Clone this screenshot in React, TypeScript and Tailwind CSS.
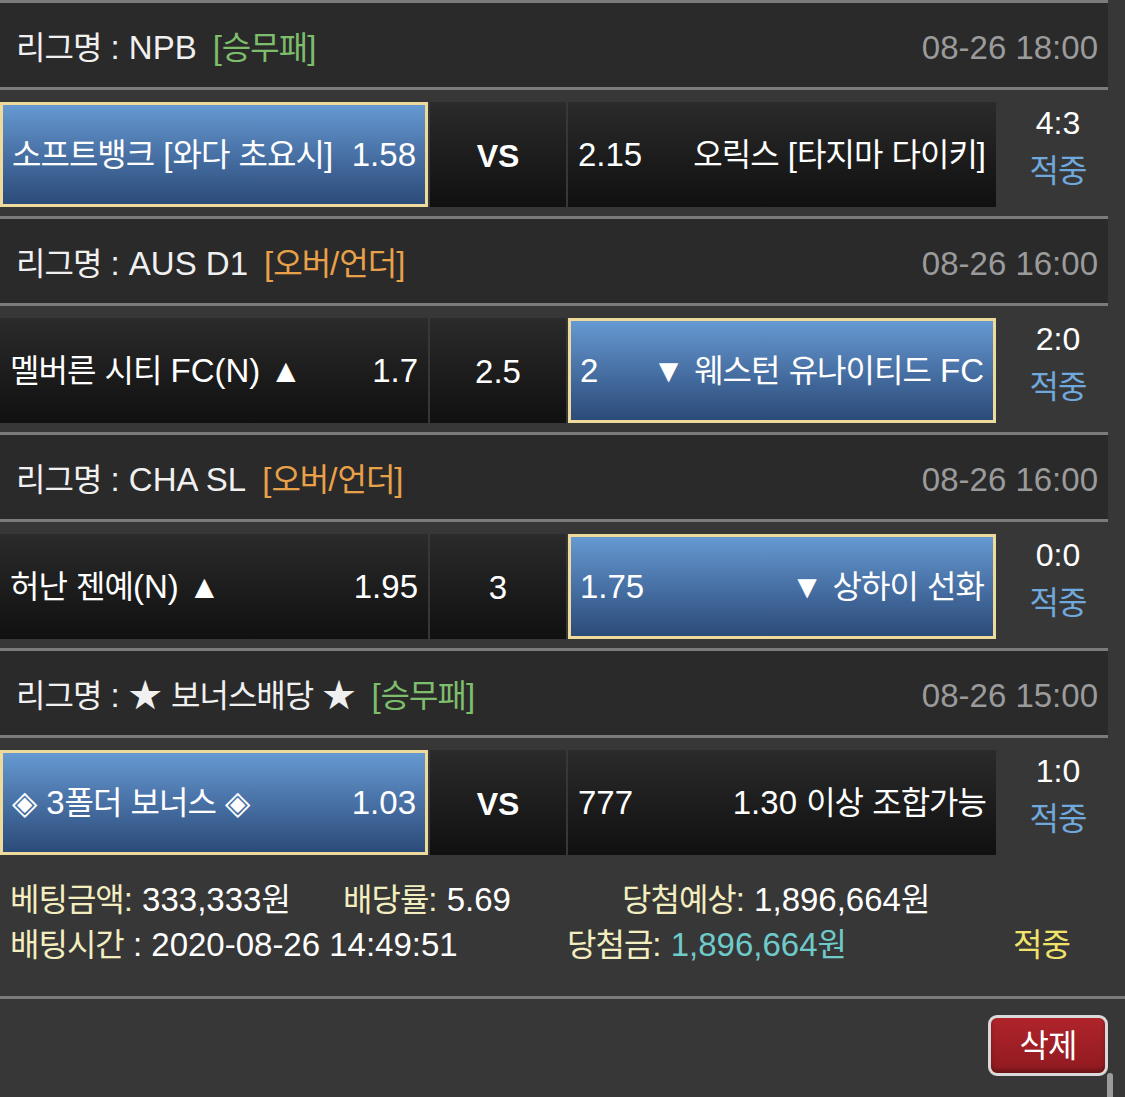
import React from "react";

type Side = "home" | "away";

interface Game {
  id: number;
  league: string;
  kind: string;
  kindClass: string;
  date: string;
  home: string;
  homeOdds: string;
  mid: string;
  bold: boolean;
  awayOdds: string;
  away: string;
  pick: Side;
  score: string;
}

const games: Game[] = [
  {
    id: 1,
    league: "NPB",
    kind: "[승무패]",
    kindClass: "text-[#7dbd6b]",
    date: "08-26 18:00",
    home: "소프트뱅크 [와다 초요시]",
    homeOdds: "1.58",
    mid: "VS",
    bold: true,
    awayOdds: "2.15",
    away: "오릭스 [타지마 다이키]",
    pick: "home",
    score: "4:3",
  },
  {
    id: 2,
    league: "AUS D1",
    kind: "[오버/언더]",
    kindClass: "text-[#e9a149]",
    date: "08-26 16:00",
    home: "멜버른 시티 FC(N) ▲",
    homeOdds: "1.7",
    mid: "2.5",
    bold: false,
    awayOdds: "2",
    away: "▼ 웨스턴 유나이티드 FC",
    pick: "away",
    score: "2:0",
  },
  {
    id: 3,
    league: "CHA SL",
    kind: "[오버/언더]",
    kindClass: "text-[#e9a149]",
    date: "08-26 16:00",
    home: "허난 젠예(N) ▲",
    homeOdds: "1.95",
    mid: "3",
    bold: false,
    awayOdds: "1.75",
    away: "▼ 상하이 선화",
    pick: "away",
    score: "0:0",
  },
  {
    id: 4,
    league: "★ 보너스배당 ★",
    kind: "[승무패]",
    kindClass: "text-[#7dbd6b]",
    date: "08-26 15:00",
    home: "◈ 3폴더 보너스 ◈",
    homeOdds: "1.03",
    mid: "VS",
    bold: true,
    awayOdds: "777",
    away: "1.30 이상 조합가능",
    pick: "home",
    score: "1:0",
  },
];

// 한글 구간은 글자폭을 조금 좁혀서
const K = ({ t }: { t: string }) => (
  <>
    {t.split(/([가-힣]+)/).map((part, i) =>
      i % 2 ? (
        <span key={i} className="text-[32px] tracking-[-1px]">
          {part}
        </span>
      ) : (
        part
      )
    )}
  </>
);

const Cell = ({
  active,
  first,
  second,
}: {
  active: boolean;
  first: string;
  second: string;
}) => (
  <div
    className={`flex w-[428px] items-center justify-between whitespace-nowrap leading-none ${
      active
        ? "border-[3px] border-[#eedb9c] bg-linear-to-b from-[#6699d2] to-[#2c4b7a] px-[9px]"
        : "bg-linear-to-b from-[#2b2b2b] to-[#101010] px-[10px]"
    }`}
  >
    <span>
      <K t={first} />
    </span>
    <span>
      <K t={second} />
    </span>
  </div>
);

const GameBlock = ({ game }: { game: Game }) => (
  <div>
    <div className="flex h-[84px] w-[1108px] items-center justify-between bg-[#2a2a2a] pt-[5px] pr-[10px] pl-[16px] whitespace-nowrap leading-none">
      <div className="text-[#f0f0f0]">
        <K t={`리그명 : ${game.league}`} />
        <span className={`ml-[16px] ${game.kindClass}`}>
          <K t={game.kind} />
        </span>
      </div>
      <div className="text-[#9b9b9b]">{game.date}</div>
    </div>
    <div className="h-[3px] w-[1108px] bg-[#7b7b7b]" />
    <div className="flex h-[126px] w-[1108px] gap-[2px] pt-[12px] pb-[9px]">
      <Cell active={game.pick === "home"} first={game.home} second={game.homeOdds} />
      <div
        className={`flex w-[136px] items-center justify-center bg-linear-to-b from-[#2b2b2b] to-[#101010] pt-[2px] leading-none ${
          game.bold ? "font-bold text-[32px]" : ""
        }`}
      >
        {game.mid}
      </div>
      <Cell active={game.pick === "away"} first={game.awayOdds} second={game.away} />
      <div className="-mt-[3px] flex-1 pl-[10px] text-center text-[32px] leading-[48px]">
        <div>{game.score}</div>
        <div className="text-[#70a8dc]">
          <K t="적중" />
        </div>
      </div>
    </div>
  </div>
);

export default function App() {
  return (
    <div className="relative min-h-screen overflow-hidden bg-[#373737] font-['Liberation_Sans','Noto_Sans_CJK_KR',sans-serif] text-[33px] text-white">
      <div className="h-[3px] w-[1108px] bg-[#7b7b7b]" />
      {games.map((game, idx) => (
        <div key={game.id}>
          <GameBlock game={game} />
          {idx < games.length - 1 && <div className="h-[3px] w-[1108px] bg-[#7b7b7b]" />}
        </div>
      ))}

      <div className="pt-[13px] pb-[29px] pl-[10px] whitespace-nowrap">
        <div className="flex h-[45px] items-center">
          <div className="w-[333px]">
            <span className="text-[#f3eec0]">
              <K t="베팅금액:" />
            </span>{" "}
            <K t="333,333원" />
          </div>
          <div className="w-[279px]">
            <span className="text-[#f3eec0]">
              <K t="배당률:" />
            </span>{" "}
            5.69
          </div>
          <div>
            <span className="text-[#f3eec0]">
              <K t="당첨예상:" />
            </span>{" "}
            <K t="1,896,664원" />
          </div>
        </div>
        <div className="flex h-[45px] items-center">
          <div className="w-[557px]">
            <span className="text-[#f3eec0]">
              <K t="배팅시간" />
            </span>{" "}
            : 2020-08-26 14:49:51
          </div>
          <div className="w-[446px]">
            <span className="text-[#f3eec0]">
              <K t="당첨금:" />
            </span>{" "}
            <span className="text-[#6fcaca]">
              <K t="1,896,664원" />
            </span>
          </div>
          <div className="text-[#f2e36b]">
            <K t="적중" />
          </div>
        </div>
      </div>
      <div className="h-[3px] w-full bg-[#7b7b7b]" />

      <div className="flex justify-end pt-[16px] pr-[17px]">
        <button className="flex h-[61px] w-[120px] items-center justify-center rounded-[9px] border-[3px] border-[#d9d9d9] bg-linear-to-b from-[#b0242b] to-[#8f1a20] text-white shadow-[inset_0_-3px_4px_rgba(0,0,0,0.3)]">
          <K t="삭제" />
        </button>
      </div>

      <div className="absolute top-[1073px] left-[1107px] h-[40px] w-[6px] rounded-t-full bg-[#9c9c9c]" />
    </div>
  );
}
